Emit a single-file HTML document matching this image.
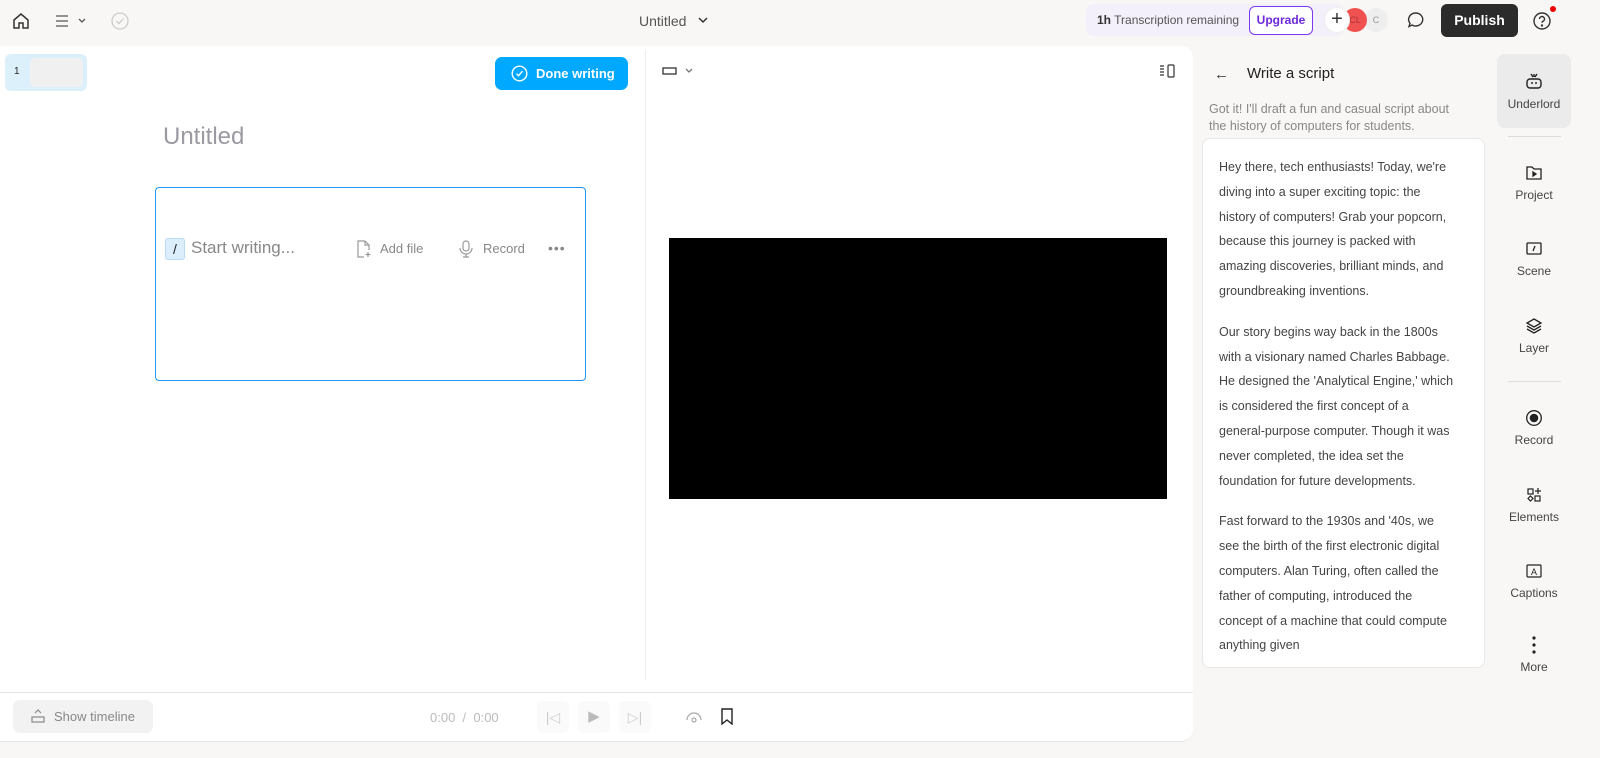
<!DOCTYPE html>
<html><head><meta charset="utf-8"><style>
*{box-sizing:border-box;margin:0;padding:0}
body{width:1600px;height:758px;background:#f8f7f5;font-family:"Liberation Sans",sans-serif;position:relative;overflow:hidden;color:#222}
.a{position:absolute}
svg{display:block}
.side div.i{position:absolute;left:1497px;width:74px;text-align:center;font-size:12px;color:#444}
.side svg{margin:0 auto 6px}
</style></head><body>
<!-- top bar -->
<svg class="a" style="left:11px;top:11px" width="20" height="20" viewBox="0 0 20 20" fill="none" stroke="#333" stroke-width="1.5"><path d="M3 9L10 3l7 6v8h-5v-5H8v5H3z"/></svg>
<svg class="a" style="left:55px;top:13px" width="32" height="16" viewBox="0 0 32 16" fill="none" stroke="#555" stroke-width="1.3"><path d="M1 3h12M1 8h12M1 13h12M24 6l3 3 3-3"/></svg>
<svg class="a" style="left:110px;top:11px" width="20" height="20" viewBox="0 0 20 20" fill="none" stroke="#ccc" stroke-width="1.3"><circle cx="10" cy="10" r="8"/><path d="M6.5 10l2.5 2.5 4.5-5"/></svg>
<div class="a" style="left:639px;top:13px;font-size:14px;color:#555">Untitled</div>
<svg class="a" style="left:697px;top:15px" width="12" height="10" viewBox="0 0 12 10" fill="none" stroke="#333" stroke-width="1.5"><path d="M2 3l4 4 4-4"/></svg>
<div class="a" style="left:1086px;top:4px;width:258px;height:32px;background:#f4f0fb;border-radius:8px"></div>
<div class="a" style="left:1097px;top:13px;font-size:12px;color:#555"><b style="color:#333">1h</b> Transcription remaining</div>
<div class="a" style="left:1249px;top:6px;width:64px;height:29px;border:1.5px solid #7c3aed;border-radius:6px;background:#fff;color:#6d28d9;font-size:12px;font-weight:bold;text-align:center;line-height:26px">Upgrade</div>
<div class="a" style="left:1364px;top:8px;width:24px;height:24px;border-radius:50%;background:#eee;font-size:9px;color:#999;text-align:center;line-height:24px">C</div>
<div class="a" style="left:1343px;top:8px;width:24px;height:24px;border-radius:50%;background:#f05252;font-size:9px;color:#a33;text-align:center;line-height:24px">CL</div>
<div class="a" style="left:1324px;top:7px;width:26px;height:26px;border-radius:50%;background:#fff;border:1px solid #eee;font-size:20px;text-align:center;line-height:23px;color:#333">+</div>
<svg class="a" style="left:1406px;top:10px" width="20" height="20" viewBox="0 0 20 20" fill="none" stroke="#333" stroke-width="1.4"><path d="M10 3a7 6.5 0 1 1-4 12l-3 1.5 1-3.2A7 6.5 0 0 1 10 3z"/></svg>
<div class="a" style="left:1441px;top:4px;width:77px;height:33px;background:#2b2b2b;border-radius:6px;color:#fff;font-size:14px;font-weight:bold;text-align:center;line-height:33px">Publish</div>
<svg class="a" style="left:1532px;top:10px" width="22" height="22" viewBox="0 0 22 22" fill="none" stroke="#333" stroke-width="1.4"><circle cx="10" cy="11" r="8"/><path d="M7.5 9a2.5 2.5 0 1 1 3.5 2.3c-.7.3-1 .8-1 1.5"/><circle cx="10" cy="15.5" r=".5" fill="#333"/></svg>
<div class="a" style="left:1550px;top:6px;width:6px;height:6px;border-radius:50%;background:#e00"></div>

<!-- main panel -->
<div class="a" style="left:0;top:46px;width:1193px;height:696px;background:#fff;border-radius:0 12px 12px 0;border-bottom:1px solid #e5e5e5"></div>
<div class="a" style="left:5px;top:54px;width:82px;height:37px;background:#dcf0fc;border-radius:6px"></div>
<div class="a" style="left:14px;top:66px;font-size:10px">1</div>
<div class="a" style="left:30px;top:58px;width:53px;height:29px;background:#f0f0f0;border-radius:5px"></div>
<div class="a" style="left:495px;top:57px;width:133px;height:33px;background:#00a8ff;border-radius:7px;color:#fff;font-size:13px;font-weight:bold;line-height:33px;padding-left:41px">Done writing</div>
<svg class="a" style="left:511px;top:65px" width="17" height="17" viewBox="0 0 17 17" fill="none" stroke="#fff" stroke-width="1.4"><circle cx="8.5" cy="8.5" r="7.3"/><path d="M5.5 8.7l2 2 4-4.5"/></svg>
<div class="a" style="left:163px;top:123px;font-size:24px;color:#9a9aa2">Untitled</div>
<div class="a" style="left:155px;top:187px;width:431px;height:194px;border:1.5px solid #2196f3;border-radius:4px"></div>
<div class="a" style="left:165px;top:238px;width:20px;height:22px;background:#dcedfc;border:1px solid #b9dcf6;border-radius:3px;font-size:14px;text-align:center;line-height:20px">/</div>
<div class="a" style="left:191px;top:238px;font-size:17px;color:#888">Start writing...</div>
<svg class="a" style="left:355px;top:240px" width="18" height="18" viewBox="0 0 18 18" fill="none" stroke="#999" stroke-width="1.2"><path d="M10 1H3v16h6M10 1l4 4v5M10 1v4h4M13 12v5M10.5 14.5h5"/></svg>
<div class="a" style="left:380px;top:241px;font-size:13px;color:#888">Add file</div>
<svg class="a" style="left:458px;top:240px" width="16" height="18" viewBox="0 0 16 18" fill="none" stroke="#999" stroke-width="1.2"><rect x="5" y="1" width="6" height="10" rx="3"/><path d="M2 8a6 6 0 0 0 12 0M8 14v3M5 17h6"/></svg>
<div class="a" style="left:483px;top:241px;font-size:13px;color:#888">Record</div>
<div class="a" style="left:548px;top:240px;font-size:14px;color:#888;letter-spacing:1px">•••</div>
<div class="a" style="left:645px;top:50px;width:1px;height:630px;background:#eee"></div>
<svg class="a" style="left:662px;top:64px" width="34" height="14" viewBox="0 0 34 14" fill="none" stroke="#333" stroke-width="1.3"><rect x="1" y="4" width="13" height="6"/><path d="M24 5l3 3 3-3" stroke="#777"/></svg>
<svg class="a" style="left:1159px;top:64px" width="18" height="14" viewBox="0 0 18 14" fill="none" stroke="#333" stroke-width="1.2"><path d="M1 2h4M1 5h4M1 8h4M1 11h4"/><rect x="9" y="1" width="6" height="12" rx="1"/></svg>
<div class="a" style="left:669px;top:238px;width:498px;height:261px;background:#000"></div>
<div class="a" style="left:0;top:692px;width:1193px;height:1px;background:#e5e5e5"></div>
<div class="a" style="left:13px;top:700px;width:140px;height:33px;background:#f2f2f2;border-radius:7px;font-size:13px;color:#888;line-height:33px;padding-left:41px">Show timeline</div>
<svg class="a" style="left:30px;top:708px" width="16" height="16" viewBox="0 0 16 16" fill="none" stroke="#888" stroke-width="1.2"><path d="M5 5l3-3 3 3"/><rect x="2" y="9" width="12" height="5"/></svg>
<div class="a" style="left:430px;top:710px;font-size:13px;color:#bbb">0:00 &nbsp;/ &nbsp;0:00</div>
<div class="a" style="left:537px;top:701px;width:32px;height:32px;background:#fafafa;border-radius:6px;color:#ccc;font-size:14px;text-align:center;line-height:32px">|◁</div>
<div class="a" style="left:578px;top:701px;width:32px;height:32px;background:#fafafa;border-radius:6px;color:#bbb;font-size:15px;text-align:center;line-height:32px">▶</div>
<div class="a" style="left:619px;top:701px;width:32px;height:32px;background:#fafafa;border-radius:6px;color:#ccc;font-size:14px;text-align:center;line-height:32px">▷|</div>
<svg class="a" style="left:685px;top:708px" width="18" height="16" viewBox="0 0 18 16" fill="none" stroke="#aaa" stroke-width="1.2"><path d="M2 12a7 7 0 0 1 14 0"/><circle cx="9" cy="12" r="2"/></svg>
<svg class="a" style="left:720px;top:708px" width="14" height="17" viewBox="0 0 14 17" fill="none" stroke="#222" stroke-width="1.4"><path d="M2 1h10v15l-5-4-5 4z"/></svg>

<!-- right panel -->
<div class="a" style="left:1214px;top:66px;font-size:15px;color:#333">←</div>
<div class="a" style="left:1247px;top:65px;font-size:15px;color:#222">Write a script</div>
<div class="a" style="left:1209px;top:101px;font-size:12.5px;color:#888;line-height:17px;white-space:nowrap">Got it! I'll draft a fun and casual script about<br>the history of computers for students.</div>
<div class="a" style="left:1202px;top:138px;width:283px;height:530px;background:#fff;border:1px solid #e8e8e8;border-radius:8px;padding:16px 0 0 16px;font-size:12.5px;line-height:24.8px;color:#444;white-space:nowrap;overflow:hidden">
<p style="margin-bottom:16px">Hey there, tech enthusiasts! Today, we're<br>diving into a super exciting topic: the<br>history of computers! Grab your popcorn,<br>because this journey is packed with<br>amazing discoveries, brilliant minds, and<br>groundbreaking inventions.</p>
<p style="margin-bottom:16px">Our story begins way back in the 1800s<br>with a visionary named Charles Babbage.<br>He designed the 'Analytical Engine,' which<br>is considered the first concept of a<br>general-purpose computer. Though it was<br>never completed, the idea set the<br>foundation for future developments.</p>
<p>Fast forward to the 1930s and '40s, we<br>see the birth of the first electronic digital<br>computers. Alan Turing, often called the<br>father of computing, introduced the<br>concept of a machine that could compute<br>anything given</p>
</div>

<!-- side nav -->
<div class="side">
<div class="a" style="left:1497px;top:54px;width:74px;height:74px;background:#ebebeb;border-radius:8px"></div>
<div class="i" style="top:71px"><svg width="20" height="20" viewBox="0 0 20 20" fill="none" stroke="#222" stroke-width="1.4"><rect x="3" y="8" width="14" height="9" rx="3"/><path d="M8 11v2M12 11v2M7 3l2 3M13 3l-2 3M10 3v3"/></svg>Underlord</div>
<div class="a" style="left:1508px;top:136px;width:53px;height:1px;background:#ddd"></div>
<div class="i" style="top:164px"><svg width="18" height="18" viewBox="0 0 18 18" fill="none" stroke="#222" stroke-width="1.3"><path d="M2 3h5l2 2h7v10H2z"/><path d="M8 8l3 2-3 2z" fill="#222"/></svg>Project</div>
<div class="i" style="top:240px"><svg width="18" height="18" viewBox="0 0 18 18" fill="none" stroke="#222" stroke-width="1.3"><rect x="2" y="3" width="14" height="11" rx="1"/><path d="M10 6l-2 5"/></svg>Scene</div>
<div class="i" style="top:317px"><svg width="18" height="18" viewBox="0 0 18 18" fill="none" stroke="#222" stroke-width="1.3"><path d="M9 2l7 4-7 4-7-4z M2 9l7 4 7-4M2 12l7 4 7-4"/></svg>Layer</div>
<div class="a" style="left:1508px;top:381px;width:53px;height:1px;background:#ddd"></div>
<div class="i" style="top:409px"><svg width="18" height="18" viewBox="0 0 18 18"><circle cx="9" cy="9" r="7.3" fill="none" stroke="#222" stroke-width="1.3"/><circle cx="9" cy="9" r="4.3" fill="#222"/></svg>Record</div>
<div class="i" style="top:486px"><svg width="18" height="18" viewBox="0 0 18 18" fill="none" stroke="#222" stroke-width="1.2"><rect x="3" y="3" width="5" height="5"/><path d="M13 2v6M10 5h6M5.5 10l2.5 2.5-2.5 2.5-2.5-2.5z"/><rect x="10" y="10" width="5" height="5"/></svg>Elements</div>
<div class="i" style="top:562px"><svg width="18" height="18" viewBox="0 0 18 18" fill="none" stroke="#222" stroke-width="1.2"><rect x="2" y="3" width="14" height="12" rx="1"/><text x="9" y="13" font-size="9" text-anchor="middle" fill="#222" stroke="none" font-family="Liberation Sans">A</text></svg>Captions</div>
<div class="i" style="top:636px"><svg width="18" height="18" viewBox="0 0 18 18" fill="#222"><circle cx="9" cy="2" r="1.6"/><circle cx="9" cy="9" r="1.6"/><circle cx="9" cy="16" r="1.6"/></svg>More</div>
</div>
</body></html>
